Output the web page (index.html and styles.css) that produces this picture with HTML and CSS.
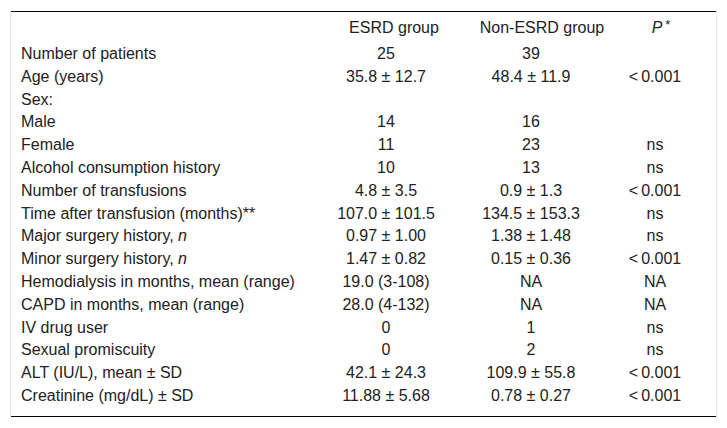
FILE: index.html
```html
<!DOCTYPE html>
<html lang="en">
<head>
<meta charset="utf-8">
<title>Table</title>
<link rel="stylesheet" href="styles.css">
</head>
<body>
<div class="wrap">
<table class="data">
<colgroup>
<col class="c-label"><col class="c-esrd"><col class="c-non"><col class="c-p">
</colgroup>
<thead>
<tr><th></th><th class="h-esrd">ESRD group</th><th class="h-non">Non-ESRD group</th><th class="h-p"><i>P</i><sup>*</sup></th></tr>
</thead>
<tbody>
<tr><td>Number of patients</td><td>25</td><td>39</td><td></td></tr>
<tr><td>Age (years)</td><td>35.8 ± 12.7</td><td>48.4 ± 11.9</td><td><span class="lt">&lt;</span>0.001</td></tr>
<tr><td>Sex:</td><td></td><td></td><td></td></tr>
<tr><td>Male</td><td>14</td><td>16</td><td></td></tr>
<tr><td>Female</td><td>11</td><td>23</td><td>ns</td></tr>
<tr><td>Alcohol consumption history</td><td>10</td><td>13</td><td>ns</td></tr>
<tr><td>Number of transfusions</td><td>4.8 ± 3.5</td><td>0.9 ± 1.3</td><td><span class="lt">&lt;</span>0.001</td></tr>
<tr><td>Time after transfusion (months)**</td><td>107.0 ± 101.5</td><td>134.5 ± 153.3</td><td>ns</td></tr>
<tr><td>Major surgery history, <i>n</i></td><td>0.97 ± 1.00</td><td>1.38 ± 1.48</td><td>ns</td></tr>
<tr><td>Minor surgery history, <i>n</i></td><td>1.47 ± 0.82</td><td>0.15 ± 0.36</td><td><span class="lt">&lt;</span>0.001</td></tr>
<tr><td>Hemodialysis in months, mean (range)</td><td>19.0 (3-108)</td><td>NA</td><td>NA</td></tr>
<tr><td>CAPD in months, mean (range)</td><td>28.0 (4-132)</td><td>NA</td><td>NA</td></tr>
<tr><td>IV drug user</td><td>0</td><td>1</td><td>ns</td></tr>
<tr><td>Sexual promiscuity</td><td>0</td><td>2</td><td>ns</td></tr>
<tr><td>ALT (IU/L), mean ± SD</td><td>42.1 ± 24.3</td><td>109.9 ± 55.8</td><td><span class="lt">&lt;</span>0.001</td></tr>
<tr class="last"><td>Creatinine (mg/dL) ± SD</td><td>11.88 ± 5.68</td><td>0.78 ± 0.27</td><td><span class="lt">&lt;</span>0.001</td></tr>
</tbody>
</table>
</div>
</body>
</html>
```
FILE: styles.css
```css
html, body {
  margin: 0;
  padding: 0;
  background: #fff;
}
body {
  font-family: "Liberation Sans", Arial, sans-serif;
  font-size: 16px;
  color: #222;
}
.wrap {
  margin: 10px 10px 0;
  padding-top: 1px;
  border-left: 1px solid #e4e4e4;
  border-right: 1px solid #e4e4e4;
  width: 705px;
}
.data {
  width: 705px;
  table-layout: fixed;
  border-collapse: collapse;
  border-top: 1px solid #000;
  border-bottom: 1px solid #000;
}
.c-label { width: 305px; }
.c-esrd { width: 140px; }
.c-non { width: 150px; }
.c-p { width: 110px; }
.data th {
  font-weight: normal;
  height: 31px;
  line-height: 31px;
  padding: 0;
  text-align: center;
  white-space: nowrap;
}
.data th.h-esrd { padding-left: 16px; }
.data th.h-non { padding-left: 22px; }
.data th.h-p { padding-left: 16px; padding-right: 16px; }
.data th sup {
  font-size: 13px;
  vertical-align: 4px;
  line-height: 0;
  margin-left: 3px;
}
.data td {
  height: 22.8px;
  line-height: 22.8px;
  padding: 0;
  text-align: center;
  white-space: nowrap;
}
.data td:first-child {
  text-align: left;
  padding-left: 10px;
}
.data td:last-child {
  padding-right: 12px;
}
.data .lt {
  margin-right: 3px;
}
.data tr.last td {
  padding-bottom: 8px;
}
```
